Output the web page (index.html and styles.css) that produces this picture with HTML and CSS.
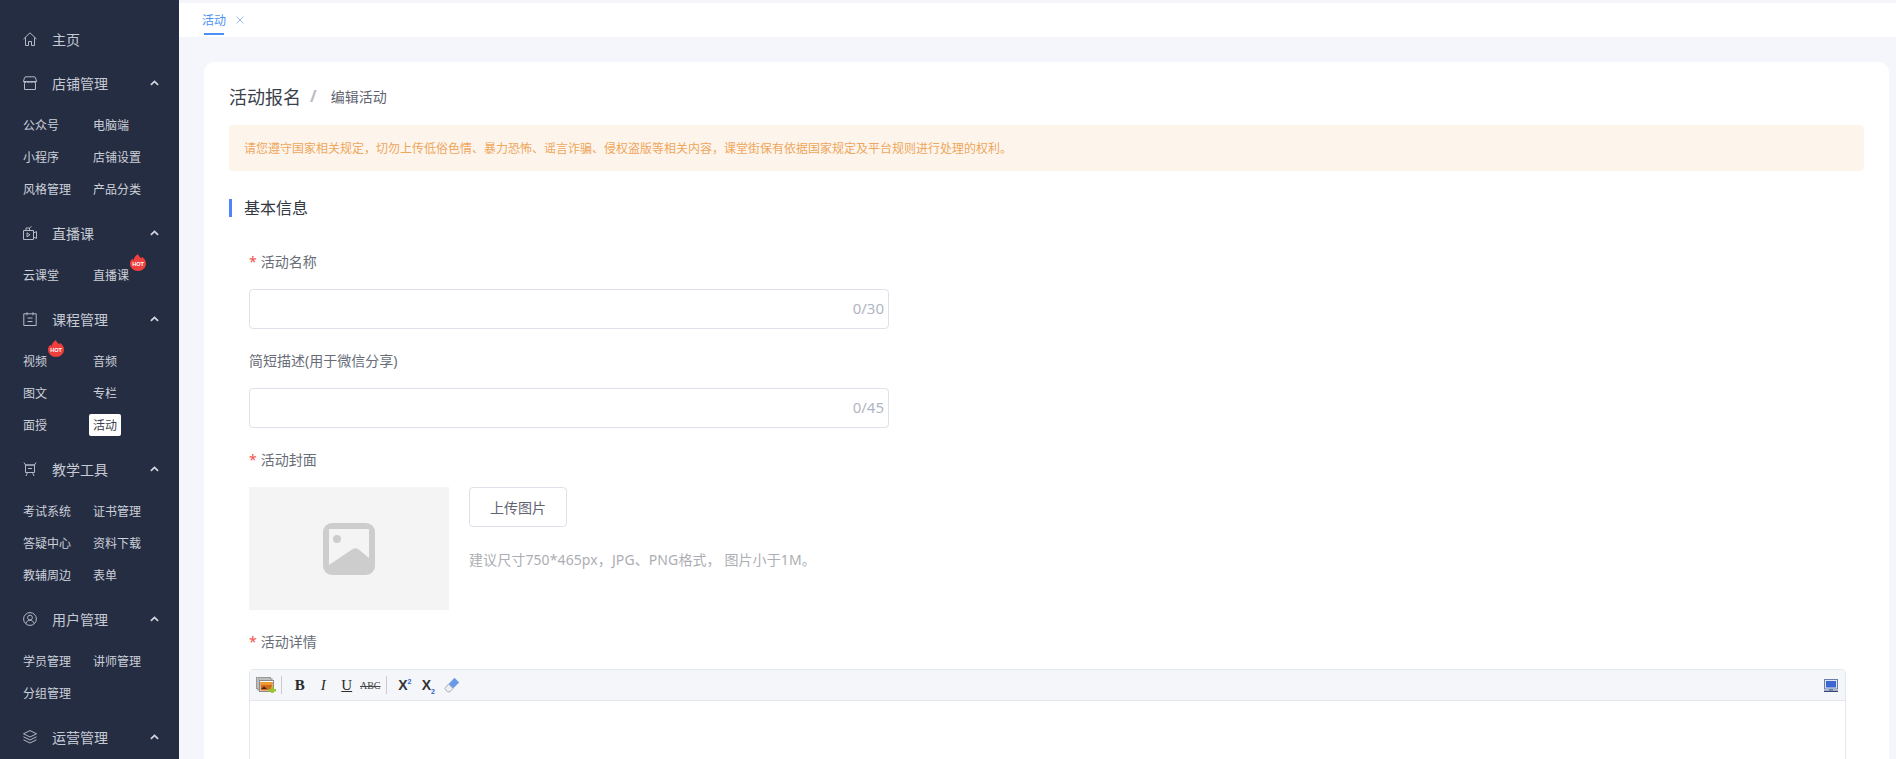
FILE: index.html
```html
<!DOCTYPE html>
<html lang="zh-CN">
<head>
<meta charset="utf-8">
<title>编辑活动</title>
<link rel="stylesheet" href="styles.css">
</head>
<body>
<svg class="defs" width="0" height="0">
  <symbol id="chev" viewBox="0 0 10 6"><path d="M1 5 5 1.200 9 5" fill="none" stroke="currentColor" stroke-width="2"/></symbol>
</svg>
<div class="app">
  <aside class="sidebar">
    <div class="nav-head solo">
      <svg class="nav-ico" viewBox="0 0 14 14"><path d="M.5 7 7 .8l6.500 6.200M2.500 5.500v8h3v-4h3v4h3v-8"/></svg>
      <span>主页</span>
    </div>

    <section class="group">
      <div class="nav-head">
        <svg class="nav-ico" viewBox="0 0 14 14"><path d="M3 .8h8c.8 0 1.400.5 1.600 1.200l.9 3.500H.5L1.400 2C1.600 1.300 2.200.8 3 .8ZM.5 5.500c0 1.500 3 1.500 3.250 0 .25 1.500 3 1.500 3.250 0 .25 1.500 3 1.500 3.250 0 .25 1.500 3 1.500 3.250 0M1.500 7.200v6.300h11V7.200"/></svg>
        <span>店铺管理</span>
        <svg class="chev"><use href="#chev"/></svg>
      </div>
      <div class="subs">
        <a>公众号</a><a>电脑端</a><a>小程序</a><a>店铺设置</a><a>风格管理</a><a>产品分类</a>
      </div>
    </section>

    <section class="group">
      <div class="nav-head">
        <svg class="nav-ico" viewBox="0 0 14 14"><path d="M.5 4.500h10v9H.5zM10.500 7l3-1.500v7l-3-1.500M3 4.500V2h3.500v2.500M6.500 2l2-1.500M4 6.800l3 2-3 2z"/></svg>
        <span>直播课</span>
        <svg class="chev"><use href="#chev"/></svg>
      </div>
      <div class="subs">
        <a>云课堂</a>
        <a class="has-hot">直播课
          <svg class="hot hot-b" viewBox="0 0 16 17">
            <path d="M8 0c.6 2.200 2 3 3.200 4.200.5-.5.7-1 .8-1.500C14.400 4.400 16 6.800 16 9.500 16 13.700 12.400 17 8 17S0 13.700 0 9.500C0 7.400 1.100 5.900 2.400 4.800c.3.700.6 1.100 1.100 1.400C3.700 3.800 5.600 1.500 8 0Z" fill="#ee3f3c"/>
            <text x="8" y="12" text-anchor="middle" class="hot-text">HOT</text>
          </svg>
        </a>
      </div>
    </section>

    <section class="group">
      <div class="nav-head">
        <svg class="nav-ico" viewBox="0 0 14 14"><path d="M.8 1.800h12.400v11.700H.8zM4 .3v3M10 .3v3M4.500 6h5M4.500 9.500h5"/></svg>
        <span>课程管理</span>
        <svg class="chev"><use href="#chev"/></svg>
      </div>
      <div class="subs">
        <a class="has-hot">视频
          <svg class="hot hot-a" viewBox="0 0 16 17">
            <path d="M8 0c.6 2.200 2 3 3.200 4.200.5-.5.7-1 .8-1.500C14.400 4.400 16 6.800 16 9.500 16 13.700 12.400 17 8 17S0 13.700 0 9.500C0 7.400 1.100 5.900 2.400 4.800c.3.700.6 1.100 1.100 1.400C3.700 3.800 5.600 1.500 8 0Z" fill="#ee3f3c"/>
            <text x="8" y="12" text-anchor="middle" class="hot-text">HOT</text>
          </svg>
        </a>
        <a>音频</a><a>图文</a><a>专栏</a><a>面授</a><a class="on">活动</a>
      </div>
    </section>

    <section class="group">
      <div class="nav-head">
        <svg class="nav-ico" viewBox="0 0 14 14"><path d="M1 .5l1.500 2.500h9L13 .5M2.500 3h9v7.500h-9zM4.500 10.500 3 14M9.500 10.500 11 14M5 6.500h4"/></svg>
        <span>教学工具</span>
        <svg class="chev"><use href="#chev"/></svg>
      </div>
      <div class="subs">
        <a>考试系统</a><a>证书管理</a><a>答疑中心</a><a>资料下载</a><a>教辅周边</a><a>表单</a>
      </div>
    </section>

    <section class="group">
      <div class="nav-head">
        <svg class="nav-ico" viewBox="0 0 14 14"><circle cx="7" cy="7" r="6.400"/><circle cx="7" cy="5.600" r="2.400"/><path d="M3 11.500C3.500 9.400 5.100 8.300 7 8.300s3.500 1.100 4 3.200"/></svg>
        <span>用户管理</span>
        <svg class="chev"><use href="#chev"/></svg>
      </div>
      <div class="subs">
        <a>学员管理</a><a>讲师管理</a><a>分组管理</a>
      </div>
    </section>

    <section class="group">
      <div class="nav-head">
        <svg class="nav-ico" viewBox="0 0 14 14"><path d="M7 .6l6.500 3.200L7 7 .5 3.800zM.5 6.800 7 10l6.500-3.200M.5 9.800 7 13l6.500-3.200"/></svg>
        <span>运营管理</span>
        <svg class="chev"><use href="#chev"/></svg>
      </div>
    </section>
  </aside>

  <main class="main">
    <div class="tabbar">
      <div class="tab">活动<i class="tab-line"></i></div>
      <svg class="tab-x" viewBox="0 0 8 8"><path d="M.5.500l7 7M7.500.500l-7 7"/></svg>
    </div>

    <div class="content">
      <div class="card">
        <div class="crumbs">
          <span class="crumb-main">活动报名</span>
          <span class="crumb-sep">/</span>
          <span class="crumb-sub">编辑活动</span>
        </div>
        <div class="alert">请您遵守国家相关规定，切勿上传低俗色情、暴力恐怖、谣言诈骗、侵权盗版等相关内容，课堂街保有依据国家规定及平台规则进行处理的权利。</div>
        <h2 class="section">基本信息</h2>

        <form class="form">
          <div class="field first">
            <label class="label"><em>*</em>活动名称</label>
            <div class="input"><span class="count">0/30</span></div>
          </div>
          <div class="field">
            <label class="label">简短描述(用于微信分享)</label>
            <div class="input"><span class="count">0/45</span></div>
          </div>
          <div class="field">
            <label class="label"><em>*</em>活动封面</label>
            <div class="cover-row">
              <div class="cover">
                <svg class="cover-ico" viewBox="0 0 52 52">
                  <rect width="52" height="52" rx="9" fill="#cdcdcd"/>
                  <path d="M6 6h40v29l-9-7.500c-3-2.500-5-3-8-1L6 42Z" fill="#f4f4f4"/>
                  <circle cx="14" cy="16" r="4" fill="#cdcdcd"/>
                </svg>
              </div>
              <div class="cover-side">
                <button type="button" class="upload">上传图片</button>
                <p class="hint">建议尺寸750*465px，JPG、PNG格式， 图片小于1M。</p>
              </div>
            </div>
          </div>
          <div class="field">
            <label class="label"><em>*</em>活动详情</label>
            <div class="editor">
              <div class="toolbar">
                <svg class="tb-gallery" viewBox="0 0 20 16">
                  <rect x=".5" y=".5" width="14" height="11" fill="#e8e8e8" stroke="#9a9a9a"/>
                  <rect x="2" y="2" width="14" height="11" fill="#eee" stroke="#8f8f8f"/>
                  <rect x="3.500" y="3.500" width="14" height="11" fill="#fff" stroke="#8a8a8a"/>
                  <rect x="4.500" y="5" width="12" height="8.500" fill="#d2691e"/>
                  <rect x="4.500" y="5" width="12" height="3" fill="#ee9a2e"/>
                  <path d="M5 12l3-2.500 3 2.500z" fill="#3c2a1a"/>
                  <path d="M15 9.500h2.500V12H20v2.500h-2.500V16H15v-1.500h-2.500V12H15z" fill="#9ac52c"/>
                </svg>
                <i class="tb-sep"></i>
                <span class="tb-btn tb-b">B</span>
                <span class="tb-btn tb-i">I</span>
                <span class="tb-btn tb-u">U</span>
                <span class="tb-btn tb-s">ABC</span>
                <i class="tb-sep sep2"></i>
                <span class="tb-btn tb-x">X<sup>2</sup></span>
                <span class="tb-btn tb-x">X<sub>2</sub></span>
                <span class="tb-btn">
                  <svg class="tb-eraser" viewBox="0 0 16 16">
                    <path d="M10.500.800 15.200 5.500 9 11.500 4.500 7Z" fill="#6b9be8"/>
                    <path d="M4.500 7 9 11.500 6 14.800H3.500L.8 11.500Z" fill="#eceef2" stroke="#9aa0ac" stroke-width=".8"/>
                  </svg>
                </span>
                <svg class="tb-screen" viewBox="0 0 14 13">
                  <rect x=".5" y=".5" width="13" height="9.500" fill="#dfe5f2" stroke="#6b7fae"/>
                  <rect x="2" y="2" width="10" height="6.500" fill="#3f66cf"/>
                  <rect x="5" y="10" width="4" height="1.500" fill="#6b7fae"/>
                  <rect y="11.600" width="14" height="1.400" fill="#33457a"/>
                </svg>
              </div>
              <div class="editor-body"></div>
            </div>
          </div>
        </form>
      </div>
    </div>
  </main>
</div>
</body>
</html>
```

FILE: styles.css
```css
* { box-sizing: border-box; }
html, body { margin: 0; height: 100%; overflow: hidden; }
body {
  font-family: "Noto Sans", "Noto Sans CJK SC", sans-serif;
  font-size: 14px;
  color: #5f6470;
  background: #f5f6fb;
}
.defs { position: absolute; }
.app { display: flex; height: 100vh; }

/* sidebar */
.sidebar {
  flex: 0 0 179px;
  background: #252d43;
  padding-top: 23px;
  color: #c6cad3;
  overflow: hidden;
}
.nav-head {
  display: flex;
  align-items: center;
  height: 32px;
  padding-left: 23px;
  font-size: 14px;
  line-height: 28px;
  color: #c6cad3;
}
.nav-head span { padding-top: 2px; }
.nav-head.solo { margin-bottom: 12px; }
.nav-ico {
  flex: 0 0 14px;
  width: 14px;
  height: 14px;
  margin-right: 15px;
  fill: none;
  stroke: #b4b9c5;
  stroke-width: 1;
}
.chev {
  width: 9px;
  height: 6px;
  margin-left: auto;
  margin-right: 20px;
  color: #d2d5dc;
}
.group { margin-bottom: 12px; }
.subs {
  display: grid;
  grid-template-columns: 70px 70px;
  grid-auto-rows: 32px;
  margin-top: 10px;
  padding-left: 23px;
}
.subs a {
  position: relative;
  justify-self: start;
  align-self: center;
  height: 22px;
  font-size: 12px;
  line-height: 24px;
  color: #ccd0d8;
}
.subs a.on {
  margin-left: -4px;
  padding: 0 4px;
  background: #fff;
  border-radius: 2px;
  color: #3a3f4b;
}
.hot {
  position: absolute;
  width: 16px;
  height: 17px;
}
.hot-a { top: -10px; left: 25px; }
.hot-b { top: -10px; left: 37px; }
.hot-text {
  font-family: "Liberation Sans", sans-serif;
  font-size: 5.5px;
  font-weight: 700;
  fill: #fff;
}

/* main */
.main { flex: 1; min-width: 0; display: flex; flex-direction: column; }
.tabbar {
  display: flex;
  align-items: flex-start;
  flex: 0 0 34px;
  margin-top: 3px;
  padding-left: 23px;
  background: #fff;
}
.tab {
  position: relative;
  width: 24px;
  height: 34px;
  font-size: 12px;
  line-height: 36px;
  color: #4c92f5;
}
.tab-line {
  position: absolute;
  left: 2px;
  top: 30px;
  width: 20px;
  height: 2px;
  background: #4c92f5;
}
.tab-x {
  width: 8px;
  height: 8px;
  margin: 13px 0 0 10px;
  fill: none;
  stroke: #93b9f0;
  stroke-width: 1;
}
.content { flex: 1; padding: 25px 7px 0 25px; overflow: hidden; }
.card {
  height: 800px;
  padding: 20px 25px 0;
  background: #fff;
  border-radius: 10px;
}
.crumbs { display: flex; align-items: center; height: 28px; }
.crumb-main { font-size: 18px; color: #3a3f4b; }
.crumb-sep { margin: 0 14px 0 9px; font-size: 16px; color: #b9bcc6; font-weight: 700; }
.crumb-sub { font-size: 14px; color: #5f6470; }
.alert {
  height: 46px;
  margin-top: 15px;
  padding-left: 15px;
  font-size: 12px;
  line-height: 48px;
  color: #eea65c;
  background: #fdf5ec;
  border-radius: 4px;
}
.section {
  height: 18px;
  margin: 28px 0 0;
  padding-left: 12px;
  border-left: 3px solid #4c85f7;
  font-size: 16px;
  font-weight: 400;
  line-height: 19px;
  color: #33373f;
}
.form { padding: 0 18px 0 20px; }
.field { margin-top: 22px; }
.field.first { margin-top: 35px; }
.label {
  display: block;
  height: 20px;
  margin-bottom: 17px;
  font-size: 14px;
  line-height: 20px;
  color: #686d78;
}
.label em {
  margin-right: 4px;
  font-style: normal;
  color: #f0524a;
}
.input {
  display: flex;
  align-items: center;
  justify-content: flex-end;
  width: 640px;
  height: 40px;
  padding: 0 4px 2px 0;
  border: 1px solid #dfe1ea;
  border-radius: 4px;
  background: #fff;
}
.count { font-size: 15px; color: #b1b6c2; }
.cover-row { display: flex; }
.cover {
  display: flex;
  align-items: center;
  justify-content: center;
  width: 200px;
  height: 123px;
  background: #f4f4f4;
}
.cover-ico { width: 52px; height: 52px; }
.cover-side { margin-left: 20px; }
.upload {
  display: block;
  width: 98px;
  height: 40px;
  padding: 0 0 1px;
  border: 1px solid #dfe1ea;
  border-radius: 4px;
  background: #fff;
  font: inherit;
  font-size: 14px;
  color: #5f6470;
}
.hint {
  margin: 23px 0 0;
  font-size: 14px;
  letter-spacing: .1px;
  line-height: 20px;
  color: #acaeb3;
}
.editor {
  border: 1px solid #e4e6ee;
  border-radius: 4px 4px 0 0;
}
.toolbar {
  display: flex;
  align-items: center;
  height: 31px;
  padding: 0 7px 0 6px;
  background: #f5f6f9;
  border-bottom: 1px solid #e4e6ee;
}
.tb-gallery { width: 20px; height: 16px; }
.tb-sep {
  width: 1px;
  height: 18px;
  margin-left: 5px;
  background: #c9cbd0;
}
.sep2 { margin-left: 4px; margin-right: 6px; }
.tb-btn {
  display: flex;
  align-items: center;
  justify-content: center;
  flex: 0 0 23.5px;
  height: 20px;
  font-family: "Liberation Serif", serif;
  font-size: 15px;
  color: #2b2b2b;
}
.tb-b { margin-left: 6px; font-weight: 700; }
.tb-i { font-style: italic; }
.tb-u { text-decoration: underline; }
.tb-s { font-size: 10px; text-decoration: line-through; color: #444; }
.tb-x {
  display: block;
  line-height: 20px;
  text-align: center;
  font-family: "Liberation Sans", sans-serif;
  font-size: 14px;
  font-weight: 700;
  color: #333;
}
.tb-x sup, .tb-x sub {
  font-size: 7px;
  line-height: 0;
  color: #2e66d8;
}
.tb-eraser { width: 16px; height: 16px; }
.tb-screen { width: 14px; height: 13px; margin-left: auto; }
.editor-body { height: 300px; background: #fff; }
```
